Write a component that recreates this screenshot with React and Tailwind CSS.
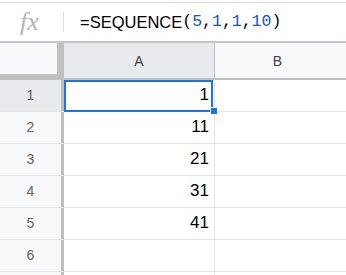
import React from "react";

const rows = [
  { n: 1, v: "1" },
  { n: 2, v: "11" },
  { n: 3, v: "21" },
  { n: 4, v: "31" },
  { n: 5, v: "41" },
  { n: 6, v: "" },
  { n: null, v: "" },
];

const App = () => {
  return (
    <div className="w-[346px] h-[275px] overflow-hidden bg-white font-['Liberation_Sans',Arial,sans-serif]">
      {/* formula bar */}
      <div className="h-[2px] bg-white" />
      <div className="h-[41px] border-t border-[#dadce0] border-b-2 border-b-[#c4c7c5] flex items-center">
        <div className="w-[63px] flex justify-center pr-[4px]">
          <span className="font-['Liberation_Serif',serif] italic text-[26px] text-[#b4b4b4] leading-none">fx</span>
        </div>
        <div className="w-px h-[20px] bg-[#dadce0]" />
        <div className="pl-[16px] text-[16.5px] text-black leading-none flex items-center">
          <span>=SEQUENCE</span>
          <span className="font-['Liberation_Mono',monospace]">
            (<span className="text-[#1155cc]">5</span>,<span className="text-[#1155cc]">1</span>,<span className="text-[#1155cc]">1</span>,<span className="text-[#1155cc]">10</span>)
          </span>
        </div>
      </div>

      {/* column headers */}
      <div className="flex h-[37px] border-b-2 border-[#c0c0c0]">
        <div className="w-[64px] bg-[#c0c0c0]">
          <div className="w-[57px] h-[31px] bg-[#f8f9fa]" />
        </div>
        <div className="w-[151px] bg-[#e8eaed] border-r border-[#c0c0c0] flex items-center justify-center pt-[2px] text-[14px] text-[#444]">
          A
        </div>
        <div className="flex-1 bg-[#f8f9fa] flex items-center justify-center pt-[2px] text-[14px] text-[#444] pr-[6px]">
          B
        </div>
      </div>

      {/* rows */}
      {rows.map((r, i) => (
        <div key={i} className="flex h-[32px] border-b border-[#e2e3e3]">
          <div
            className={`w-[64px] border-r-[3px] border-[#c0c0c0] flex items-center justify-center text-[14px] text-[#5f6368] ${
              r.n === 1 ? "bg-[#e8eaed]" : "bg-[#f8f9fa]"
            }`}
          >
            {r.n}
          </div>
          <div className="relative w-[151px] border-r border-[#e2e3e3] flex items-end justify-end pr-[5px] pb-[4px] text-[17px] text-black">
            {r.v}
            {r.n === 1 && (
              <>
                <div className="absolute left-0 top-0 w-[149px] h-[32px] border-2 border-[#1a73e8]" />
                <div className="absolute left-[146px] top-[27px] w-[8px] h-[8px] bg-[#1a73e8] border border-white z-10" />
              </>
            )}
          </div>
          <div className="flex-1" />
        </div>
      ))}
    </div>
  );
};

export default App;
